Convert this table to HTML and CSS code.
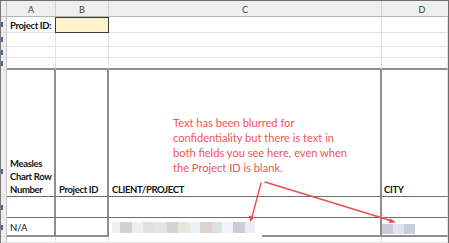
FILE: index.html
```html
<!DOCTYPE html>
<html>
<head>
<meta charset="utf-8">
<link rel="stylesheet" href="styles.css">
</head>
<body>
<div class="sheet">
  <div class="corner"></div>
  <div class="h">A</div>
  <div class="h">B</div>
  <div class="h">C</div>
  <div class="h hd">D</div>

  <div class="rh"><span class="mk"></span></div>
  <div class="c b txt mid">Project ID:</div>
  <div class="c sel"></div>
  <div class="c"></div>
  <div class="c"></div>

  <div class="rh"><span class="mk"></span></div>
  <div class="c"></div>
  <div class="c"></div>
  <div class="c"></div>
  <div class="c"></div>

  <div class="rh"><span class="mk"></span></div>
  <div class="c"></div>
  <div class="c"></div>
  <div class="c"></div>
  <div class="c"></div>

  <div class="rh"><span class="mk"></span></div>
  <div class="c bb"></div>
  <div class="c bb"></div>
  <div class="c bb"></div>
  <div class="c bb"></div>

  <div class="rh rb"><span class="mk"></span></div>
  <div class="c br bd b txt bot">Measles<br>Chart Row<br>Number</div>
  <div class="c br bd b txt bot">Project ID</div>
  <div class="c br bd b txt bot">CLIENT/PROJECT</div>
  <div class="c bd b txt bot d">CITY</div>

  <div class="rh"><span class="mk"></span></div>
  <div class="c br bd"></div>
  <div class="c br bd"></div>
  <div class="c br bd"></div>
  <div class="c bd"></div>

  <div class="rh"><span class="mk"></span></div>
  <div class="c br bb txt bot na">N/A</div>
  <div class="c br bb"></div>
  <div class="c br c8">
    <div class="blur">
      <i class="k1"></i><i class="k2"></i><i class="k3"></i><i class="k4"></i><i class="k5"></i><i class="k6"></i><i class="k7"></i><i class="k8"></i><i class="k9"></i><i class="k10"></i><i class="k11"></i><i class="k12"></i><i class="k13"></i>
    </div>
    <div class="tail"></div>
  </div>
  <div class="c bb d8">
    <div class="blur">
      <i class="m1"></i><i class="m2"></i><i class="m3"></i>
    </div>
  </div>

  <div class="rh"></div>
  <div class="c"></div>
  <div class="c"></div>
  <div class="c"></div>
  <div class="c"></div>

  <div class="note">Text has been blurred for<br>confidentiality but there is text in<br>both fields you see here, even when<br>the Project ID is blank.</div>

  <svg class="arrows" width="449" height="243" viewBox="0 0 449 243">
    <g stroke="#f24b4b" stroke-width="1.4" fill="none" stroke-linecap="round">
      <line x1="261" y1="183" x2="252" y2="217"/>
      <line x1="265" y1="182" x2="392" y2="221"/>
    </g>
    <g fill="#f24b4b">
      <polygon points="250.5,222 248.6,215.5 254.4,217"/>
      <polygon points="396,222.5 390,218.3 388.8,223"/>
    </g>
  </svg>
</div>
</body>
</html>
```

FILE: styles.css
```css
* { box-sizing: border-box; }
html, body { margin: 0; padding: 0; background: #fff; }
.sheet {
  position: relative;
  width: 449px;
  height: 243px;
  overflow: hidden;
  border-top: 1px solid #6e6e6e;
  border-left: 1px solid #7a7a7a;
  border-right: 1px solid #6e6e6e;
  display: grid;
  grid-template-columns: 6px 49px 53px 273px 1fr;
  grid-template-rows: 16px 16px 14px 11px 12px 127px 21px 19px 1fr;
  font-family: Lato, "Liberation Sans", sans-serif;
  color: #111;
}
.corner {
  background: #eeeeee;
  border-right: 1px solid #c6c6c6;
  border-bottom: 1px solid #b5b5b5;
}
.h {
  background: #eeeeee;
  border-right: 1px solid #d2d2d2;
  border-bottom: 1px solid #b5b5b5;
  font-size: 9px;
  color: #3d3d3d;
  display: flex;
  align-items: center;
  justify-content: center;
  padding-top: 2px;
}
.hd { padding-left: 14px; border-right: none; }
.rh {
  background: #eeeeee;
  border-right: 1px solid #c6c6c6;
  border-bottom: 1px solid #dcdcdc;
  display: flex;
  align-items: center;
}
.rb { align-items: flex-end; padding-bottom: 22px; }
.mk {
  display: block;
  width: 2px;
  height: 5px;
  background: #4a6690;
}
.c {
  border-right: 1px solid #e2e2e2;
  border-bottom: 1px solid #e2e2e2;
  min-width: 0;
}
.bb { border-bottom: 2px solid #8d8d8d; }
.bd { border-bottom: 1px solid #6f6f6f; }
.br { border-right: 2px solid #8d8d8d; }
.sel {
  background: #fff2cc;
  border: 1px solid #3a3a3a;
  margin-left: -1px;
}
.txt {
  font-size: 9.5px;
  letter-spacing: -0.35px;
  padding-left: 3px;
  display: flex;
  white-space: nowrap;
}
.b { font-weight: bold; }
.mid { align-items: center; padding-top: 1px; }
.bot { align-items: flex-end; line-height: 13px; padding-bottom: 0px; }
.d { padding-left: 2px; }
.na { padding-bottom: 1px; font-weight: normal; line-height: 12px; letter-spacing: 0; }
.c8 {
  display: flex;
  align-items: flex-end;
  border-bottom: none;
}
.blur {
  display: flex;
  align-self: center;
  height: 11px;
  filter: blur(0.6px);
}
.c8 .blur { margin-left: 3px; margin-top: -1px; }
.blur i { display: block; height: 100%; }
.k1 { width: 8px; background: #f3efef; }
.k2 { width: 12px; background: #d3d0d6; }
.k3 { width: 11px; background: #efedf0; }
.k4 { width: 12px; background: #e2dfe3; }
.k5 { width: 12px; background: #e1e4e9; }
.k6 { width: 11px; background: #d7d0d5; }
.k7 { width: 12px; background: #e9e7d9; }
.k8 { width: 10px; background: #eceff5; }
.k9 { width: 12px; background: #dcd2d0; }
.k10 { width: 10px; background: #d8e2e2; }
.k11 { width: 11px; background: #f0f4f8; }
.k12 { width: 12px; background: #c8cdd9; }
.k13 { width: 10px; background: #eeecf1; }
.tail {
  flex: 1;
  height: 2px;
  margin-left: 7px;
  margin-right: -2px;
  background: #8d8d8d;
}
.d8 { display: flex; }
.d8 .blur { height: 10px; margin-top: 5px; }
.m1 { width: 11px; background: #c9ccdc; }
.m2 { width: 11px; background: #e3e1ea; }
.m3 { width: 11px; background: #c8cddc; }
.note {
  position: absolute;
  left: 172px;
  top: 114px;
  font-size: 11.1px;
  line-height: 15px;
  color: #f45454;
  white-space: nowrap;
}
.arrows {
  position: absolute;
  left: -1px;
  top: -1px;
  pointer-events: none;
}
```
